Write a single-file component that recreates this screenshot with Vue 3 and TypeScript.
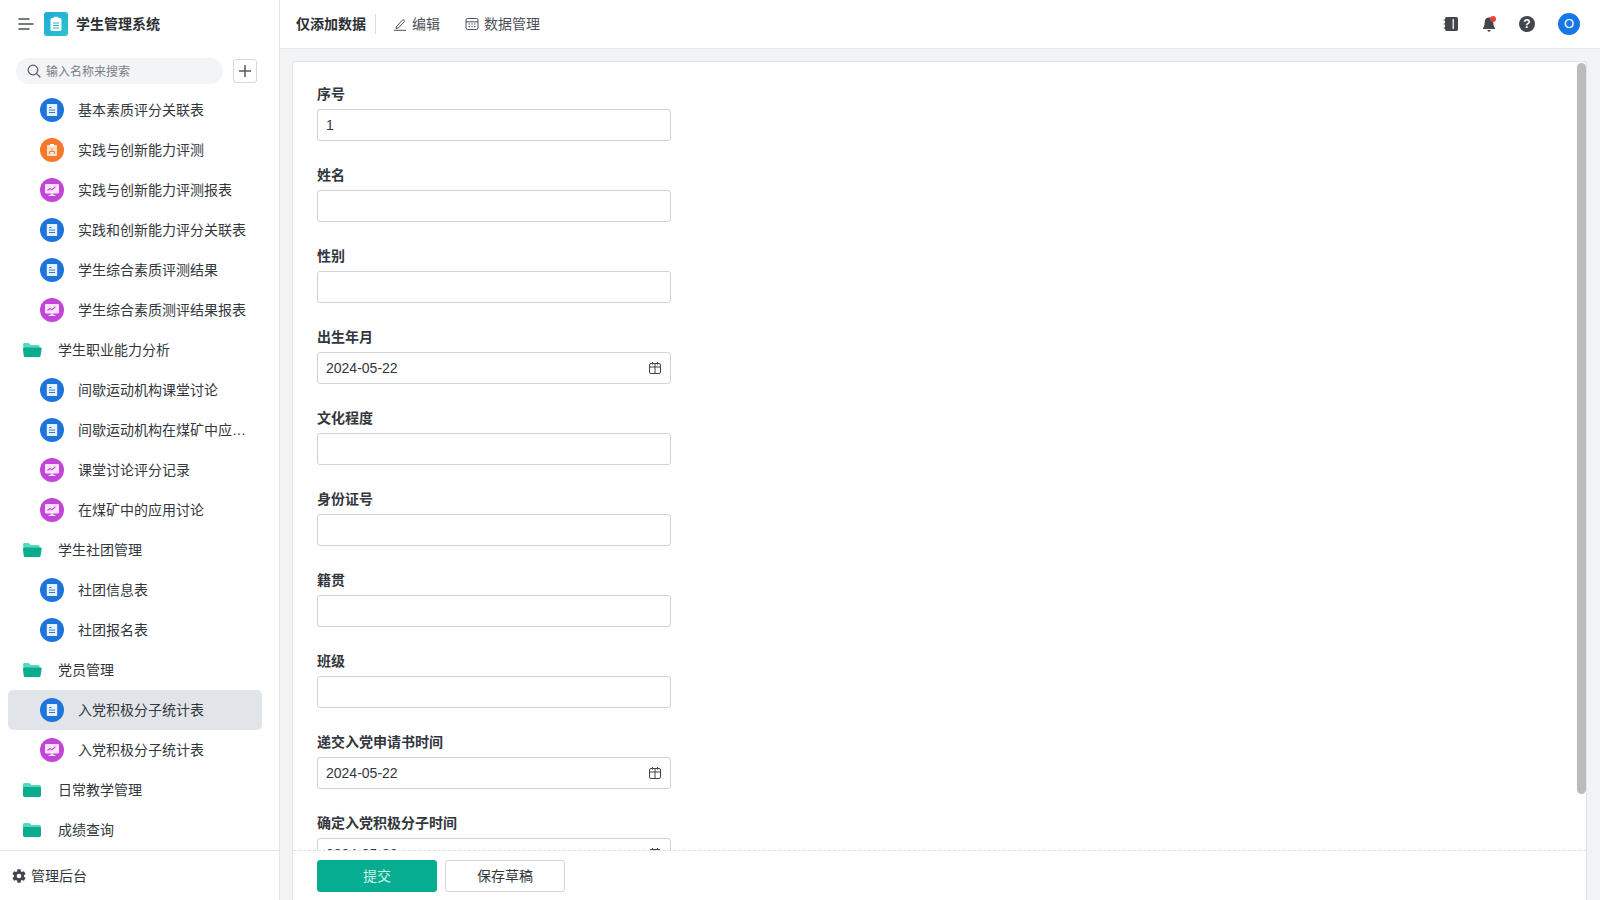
<script setup lang="ts">
type Kind = 'doc' | 'flow' | 'chart' | 'folder' | 'folder-open'
interface NavItem { label: string; kind: Kind; active?: boolean }
interface Field { label: string; value?: string; date?: boolean }

const nav: NavItem[] = [
  { label: '基本素质评分关联表', kind: 'doc' },
  { label: '实践与创新能力评测', kind: 'flow' },
  { label: '实践与创新能力评测报表', kind: 'chart' },
  { label: '实践和创新能力评分关联表', kind: 'doc' },
  { label: '学生综合素质评测结果', kind: 'doc' },
  { label: '学生综合素质测评结果报表', kind: 'chart' },
  { label: '学生职业能力分析', kind: 'folder-open' },
  { label: '间歇运动机构课堂讨论', kind: 'doc' },
  { label: '间歇运动机构在煤矿中应用讨论', kind: 'doc' },
  { label: '课堂讨论评分记录', kind: 'chart' },
  { label: '在煤矿中的应用讨论', kind: 'chart' },
  { label: '学生社团管理', kind: 'folder-open' },
  { label: '社团信息表', kind: 'doc' },
  { label: '社团报名表', kind: 'doc' },
  { label: '党员管理', kind: 'folder-open' },
  { label: '入党积极分子统计表', kind: 'doc', active: true },
  { label: '入党积极分子统计表', kind: 'chart' },
  { label: '日常教学管理', kind: 'folder' },
  { label: '成绩查询', kind: 'folder' }
]

const fields: Field[] = [
  { label: '序号', value: '1' },
  { label: '姓名' },
  { label: '性别' },
  { label: '出生年月', value: '2024-05-22', date: true },
  { label: '文化程度' },
  { label: '身份证号' },
  { label: '籍贯' },
  { label: '班级' },
  { label: '递交入党申请书时间', value: '2024-05-22', date: true },
  { label: '确定入党积极分子时间', value: '2024-05-22', date: true }
]

const isFolder = (k: Kind): boolean => k === 'folder' || k === 'folder-open'
</script>

<template>
  <div class="app">
    <aside class="sidebar">
      <div class="brand">
        <svg class="menu" width="16" height="14" viewBox="0 0 16 14">
          <path d="M1 2h10M1 7h14M1 12h10" stroke="#4a4f57" stroke-width="1.6" stroke-linecap="round" fill="none" />
        </svg>
        <div class="logo">
          <svg width="14" height="16" viewBox="0 0 14 16">
            <rect x="1.5" y="2" width="11" height="13" rx="1.5" fill="#fff" />
            <rect x="4.5" y="0.8" width="5" height="2.6" rx="1" fill="#fff" />
            <path d="M4 7h6M4 9.5h6M4 12h6" stroke="#25b3d4" stroke-width="1.1" />
          </svg>
        </div>
        <span class="brand-name">学生管理系统</span>
      </div>
      <div class="search-row">
        <div class="search">
          <svg width="14" height="14" viewBox="0 0 14 14">
            <circle cx="6" cy="6" r="4.8" fill="none" stroke="#555a62" stroke-width="1.2" />
            <path d="M9.6 9.6 13 13" stroke="#555a62" stroke-width="1.2" stroke-linecap="round" />
          </svg>
          <span class="lift">输入名称来搜索</span>
        </div>
        <button class="add" type="button">
          <svg width="14" height="14" viewBox="0 0 14 14">
            <path d="M7 1v12M1 7h12" stroke="#555a62" stroke-width="1.5" />
          </svg>
        </button>
      </div>
      <nav class="nav">
        <div
          v-for="(item, i) in nav"
          :key="i"
          class="nav-row"
          :class="{ active: item.active, folder: isFolder(item.kind) }"
        >
          <svg v-if="item.kind === 'folder-open'" class="folder-icon" width="20" height="16" viewBox="0 0 20 16">
            <path d="M1 2.5C1 1.7 1.6 1 2.4 1h4.2l2 2h7.600c.8 0 1.400.6 1.400 1.400V6H3.600L2 11z" fill="#55d9c0" />
            <path d="M2.800 5.600h15.800c.7 0 1.200.6 1.100 1.300l-1.200 7.100c-.1.6-.6 1-1.200 1H3c-.6 0-1.100-.4-1.200-1L1 7.200c0-.9.900-1.600 1.800-1.600z" fill="#0bab8e" />
          </svg>
          <svg v-else-if="item.kind === 'folder'" class="folder-icon" width="20" height="16" viewBox="0 0 20 16">
            <path d="M1 2.400C1 1.600 1.600 1 2.400 1h5l2 2h8.200c.8 0 1.400.6 1.400 1.400V6H1z" fill="#55d9c0" />
            <rect x="1" y="5" width="18" height="10" rx="1.400" fill="#0bab8e" />
          </svg>
          <span v-else class="badge" :class="item.kind">
            <svg v-if="item.kind === 'doc'" width="14" height="14" viewBox="0 0 14 14">
              <path d="M2.500 1h9c.4 0 .7.3.7.7v10.600c0 .4-.3.7-.7.7h-9c-.4 0-.7-.3-.7-.7V1.700c0-.4.3-.7.7-.7z" fill="#e6f0fc" />
              <path d="M4 4.500h2.500M4 7h6M4 9.500h6" stroke="#2a7de1" stroke-width="1.200" />
            </svg>
            <svg v-else-if="item.kind === 'flow'" width="14" height="14" viewBox="0 0 14 14">
              <rect x="2" y="2" width="10" height="11" rx="1" fill="#fde3cf" />
              <rect x="5" y="1" width="4" height="2" fill="#fff" />
              <path d="M7 5v3M4.500 11V8.500h5V11" stroke="#f5792a" stroke-width="1" fill="none" />
            </svg>
            <svg v-else width="16" height="14" viewBox="0 0 16 14">
              <rect x="1" y="1" width="14" height="9.500" rx="1" fill="#f6e4fa" />
              <path d="M3.500 7.500 6 5.500l2 1.200 3.500-3" stroke="#c443d8" stroke-width="1.100" fill="none" />
              <path d="M6.500 10.500h3V12h2v1h-7v-1h2z" fill="#f6e4fa" />
            </svg>
          </span>
          <span class="nav-label lift">{{ item.label }}</span>
        </div>
      </nav>
      <div class="admin">
        <svg width="16" height="16" viewBox="0 0 24 24">
          <path fill="#42464d" d="M19.430 12.980c.04-.32.07-.64.07-.98s-.03-.66-.07-.98l2.110-1.650c.19-.15.240-.42.120-.64l-2-3.460c-.12-.22-.39-.3-.61-.22l-2.490 1c-.52-.4-1.080-.73-1.690-.98l-.38-2.650A.49.49 0 0 0 14 2h-4c-.25 0-.46.18-.49.420l-.38 2.650c-.61.25-1.170.59-1.690.98l-2.490-1c-.23-.09-.49 0-.61.22l-2 3.460c-.13.22-.07.49.12.64l2.110 1.650c-.04.32-.07.65-.07.98s.03.660.07.98l-2.110 1.650c-.19.15-.24.42-.12.64l2 3.460c.12.22.39.3.61.22l2.490-1c.52.4 1.080.73 1.690.98l.38 2.650c.03.24.24.42.49.42h4c.25 0 .46-.18.49-.42l.38-2.650c.61-.25 1.170-.59 1.690-.98l2.490 1c.23.09.49 0 .61-.22l2-3.460c.12-.22.07-.49-.12-.64zM12 15.500a3.500 3.500 0 1 1 0-7 3.500 3.500 0 0 1 0 7z" />
        </svg>
        <span class="lift">管理后台</span>
      </div>
    </aside>

    <div class="content">
      <header class="topbar">
        <span class="page-title lift">仅添加数据</span>
        <span class="divider"></span>
        <span class="tool">
          <svg width="14" height="14" viewBox="0 0 14 14">
            <path d="M3.500 9.500 10 2.500l1.800 1.700-6.500 6.800-2.300.5zM1 13.300h12" stroke="#4a4f57" stroke-width="1" fill="none" stroke-linejoin="round" />
          </svg>
          <span class="lift">编辑</span>
        </span>
        <span class="tool">
          <svg width="14" height="14" viewBox="0 0 14 14">
            <rect x="1" y="1.500" width="12" height="11" rx="1.500" stroke="#4a4f57" fill="none" />
            <path d="M1 4.800h12" stroke="#4a4f57" />
            <path d="M3.500 7h1.500M6.300 7h1.500M9 7h1.500M3.500 9.700h1.500M6.300 9.700h1.500M9 9.700h1.500" stroke="#4a4f57" />
          </svg>
          <span class="lift">数据管理</span>
        </span>
        <div class="top-actions">
          <svg width="16" height="16" viewBox="0 0 16 16">
            <rect x="2" y="1" width="13" height="14" rx="1.800" fill="#42464d" />
            <path d="M0.500 4h2.500M0.500 8h2.500M0.500 12h2.500" stroke="#42464d" stroke-width="1.200" />
            <rect x="9.500" y="3" width="1.500" height="10" fill="#d9dadc" />
          </svg>
          <span class="bell">
            <svg width="14" height="16" viewBox="0 0 14 16">
              <path fill="#42464d" d="M7 1.500c2.800 0 4.300 2 4.300 4.600 0 3 .6 4.600 1.700 6.100v.8H1v-.8c1.100-1.500 1.700-3.100 1.700-6.100C2.700 3.500 4.200 1.500 7 1.500zM5.300 14h3.400a1.700 1.700 0 0 1-3.400 0z" />
            </svg>
            <i class="dot"></i>
          </span>
          <span class="help">?</span>
          <span class="avatar">O</span>
        </div>
      </header>

      <main class="main">
        <section class="card">
          <div class="form-scroll">
            <div v-for="f in fields" :key="f.label" class="field">
              <label class="field-label">{{ f.label }}</label>
              <div class="input">
                <span>{{ f.value }}</span>
                <svg v-if="f.date" width="14" height="14" viewBox="0 0 14 14">
                  <rect x="1.500" y="2.500" width="11" height="10" rx="1.500" stroke="#3f444b" fill="none" />
                  <path d="M1.500 6h11M7 2.500v10M4.500 1v2.500M9.500 1v2.500" stroke="#3f444b" fill="none" />
                </svg>
              </div>
            </div>
            <div class="thumb"></div>
          </div>
          <div class="actions">
            <button class="btn primary" type="button"><span class="lift">提交</span></button>
            <button class="btn" type="button"><span class="lift">保存草稿</span></button>
          </div>
        </section>
      </main>
    </div>
  </div>
</template>

<style>
html, body { margin: 0; height: 100%; overflow: hidden; }
</style>

<style scoped>
.app {
  display: flex;
  width: 1600px;
  height: 900px;
  overflow: hidden;
  font-family: "Liberation Sans", "Noto Sans CJK SC", sans-serif;
  font-size: 14px;
  color: #33373d;
  background: #fff;
}
.lift { display: block; padding-bottom: 2px; }
.sidebar {
  width: 279px;
  flex: none;
  display: flex;
  flex-direction: column;
  border-right: 1px solid #e3e5e8;
}
.brand {
  height: 48px;
  display: flex;
  align-items: center;
  padding-left: 18px;
  flex: none;
}
.menu { margin-right: 10px; }
.logo {
  width: 24px;
  height: 24px;
  border-radius: 3px;
  background: linear-gradient(135deg, #1fa9d8, #2bc6c9);
  display: flex;
  align-items: center;
  justify-content: center;
  margin-right: 8px;
}
.brand-name { font-weight: 600; color: #2b2f35; padding-bottom: 2px; }
.search-row {
  display: flex;
  align-items: center;
  padding: 10px 0 6px 16px;
  flex: none;
}
.search {
  width: 207px;
  height: 26px;
  border-radius: 13px;
  background: #f2f4f5;
  display: flex;
  align-items: center;
  gap: 5px;
  padding-left: 11px;
  box-sizing: border-box;
  font-size: 12px;
  color: #7b8087;
}
.add {
  width: 24px;
  height: 24px;
  margin-left: 10px;
  padding: 0;
  border: 1px solid #d6d8db;
  border-radius: 3px;
  background: #fff;
  display: flex;
  align-items: center;
  justify-content: center;
}
.nav {
  flex: 1;
  min-height: 0;
  overflow: hidden;
  padding: 0 8px;
}
.nav-row {
  height: 40px;
  width: 254px;
  display: flex;
  align-items: center;
  padding-left: 32px;
  box-sizing: border-box;
  border-radius: 5px;
}
.nav-row.folder { padding-left: 14px; }
.nav-row.active { background: #e1e4e8; }
.folder-icon { margin-right: 16px; flex: none; }
.badge {
  width: 24px;
  height: 24px;
  border-radius: 50%;
  display: flex;
  align-items: center;
  justify-content: center;
  margin-right: 14px;
  flex: none;
}
.badge.doc { background: #1f74dc; }
.badge.flow { background: #f5792a; }
.badge.chart { background: #c443d8; }
.nav-label {
  width: 168px;
  white-space: nowrap;
  overflow: hidden;
  text-overflow: ellipsis;
}
.admin {
  flex: none;
  height: 49px;
  border-top: 1px solid #e3e5e8;
  display: flex;
  align-items: center;
  gap: 4px;
  padding-left: 11px;
}
.content {
  flex: 1;
  min-width: 0;
  display: flex;
  flex-direction: column;
}
.topbar {
  height: 49px;
  flex: none;
  display: flex;
  align-items: center;
  padding: 0 0 0 16px;
  border-bottom: 1px solid #e6e8ea;
  box-sizing: border-box;
}
.page-title { font-weight: 600; color: #2b2f35; }
.divider {
  width: 1px;
  height: 20px;
  background: #d9dbde;
  margin: 0 17px 0 9px;
}
.tool {
  display: flex;
  align-items: center;
  gap: 5px;
  margin-right: 25px;
  color: #4a4f57;
}
.top-actions {
  margin-left: auto;
  display: flex;
  align-items: center;
  gap: 22px;
  padding-right: 20px;
}
.bell {
  position: relative;
  display: flex;
  justify-content: center;
  width: 16px;
}
.dot {
  position: absolute;
  top: 0;
  right: 1px;
  width: 6px;
  height: 6px;
  border-radius: 50%;
  background: #e8403f;
}
.help {
  width: 16px;
  height: 16px;
  border-radius: 50%;
  background: #42464d;
  color: #fff;
  font-size: 12px;
  font-weight: 700;
  line-height: 16px;
  text-align: center;
}
.avatar {
  width: 22px;
  height: 22px;
  margin-left: 1px;
  border-radius: 50%;
  background: #1677e5;
  color: #fff;
  font-size: 13px;
  line-height: 22px;
  text-align: center;
}
.main {
  flex: 1;
  min-height: 0;
  background: #f1f3f5;
  padding: 12px 13px 0 12px;
}
.card {
  height: 100%;
  box-sizing: border-box;
  background: #fff;
  border: 1px solid #e1e3e6;
  border-bottom: 0;
  border-radius: 4px 4px 0 0;
  display: flex;
  flex-direction: column;
  position: relative;
}
.form-scroll {
  flex: 1;
  min-height: 0;
  overflow: hidden;
  padding: 20px 24px 0;
}
.field { height: 81px; }
.field-label {
  display: block;
  height: 27px;
  line-height: 24px;
  font-weight: 600;
  color: #33373d;
}
.input {
  width: 354px;
  height: 32px;
  box-sizing: border-box;
  border: 1px solid #cfd2d6;
  border-radius: 3px;
  padding: 0 8px;
  display: flex;
  align-items: center;
  justify-content: space-between;
  color: #33373d;
}
.thumb {
  position: absolute;
  top: 1px;
  right: 0;
  width: 9px;
  height: 731px;
  border-radius: 5px;
  background: #b9bbbd;
}
.actions {
  flex: none;
  height: 50px;
  box-sizing: border-box;
  border-top: 1px dashed #dcdee1;
  display: flex;
  align-items: center;
  gap: 8px;
  padding: 0 24px;
}
.btn {
  width: 120px;
  height: 32px;
  border: 1px solid #d3d5d8;
  border-radius: 3px;
  background: #fff;
  font: inherit;
  color: #33373d;
  padding: 0;
}
.btn.primary {
  background: #06ad90;
  border-color: #06ad90;
  color: #cdf3ea;
}
</style>
